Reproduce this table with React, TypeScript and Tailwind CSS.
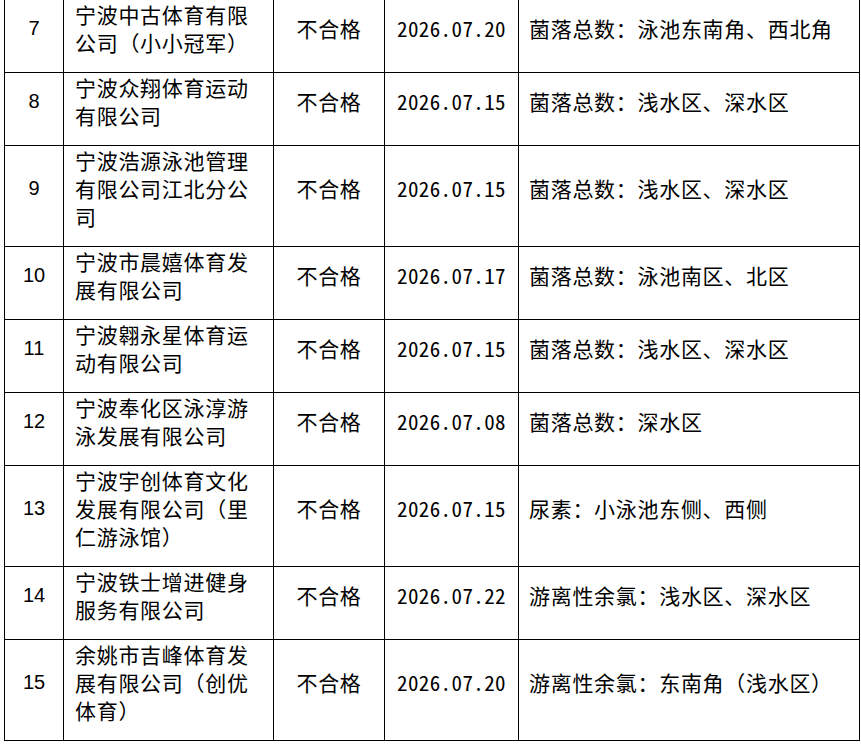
interface Row {
  no: number;
  company: string;
  result: string;
  date: string;
  item: string;
}

const rows: Row[] = [
  { no: 7, company: "宁波中古体育有限公司（小小冠军）", result: "不合格", date: "2026.07.20", item: "菌落总数：泳池东南角、西北角" },
  { no: 8, company: "宁波众翔体育运动有限公司", result: "不合格", date: "2026.07.15", item: "菌落总数：浅水区、深水区" },
  { no: 9, company: "宁波浩源泳池管理有限公司江北分公司", result: "不合格", date: "2026.07.15", item: "菌落总数：浅水区、深水区" },
  { no: 10, company: "宁波市晨嬉体育发展有限公司", result: "不合格", date: "2026.07.17", item: "菌落总数：泳池南区、北区" },
  { no: 11, company: "宁波翱永星体育运动有限公司", result: "不合格", date: "2026.07.15", item: "菌落总数：浅水区、深水区" },
  { no: 12, company: "宁波奉化区泳淳游泳发展有限公司", result: "不合格", date: "2026.07.08", item: "菌落总数：深水区" },
  { no: 13, company: "宁波宇创体育文化发展有限公司（里仁游泳馆）", result: "不合格", date: "2026.07.15", item: "尿素：小泳池东侧、西侧" },
  { no: 14, company: "宁波铁士增进健身服务有限公司", result: "不合格", date: "2026.07.22", item: "游离性余氯：浅水区、深水区" },
  { no: 15, company: "余姚市吉峰体育发展有限公司（创优体育）", result: "不合格", date: "2026.07.20", item: "游离性余氯：东南角（浅水区）" },
];

// Word-style cell: small space above, paragraph spacing below
const cell = "border border-black pt-0 pb-4 align-middle leading-[28px]";

export default function App() {
  return (
    <div className="min-h-screen bg-white text-black font-['Noto_Sans_CJK_SC',sans-serif] text-[21px] tracking-[0.7px]">
      <table className="ml-1 -mt-px w-[855px] table-fixed border-collapse">
        <colgroup>
          <col className="w-[59px]" />
          <col className="w-[210px]" />
          <col className="w-[111px]" />
          <col className="w-[134px]" />
          <col className="w-[341px]" />
        </colgroup>
        <tbody>
          {rows.map((r) => (
            <tr key={r.no}>
              <td className={`${cell} text-center font-['Liberation_Sans',sans-serif] text-[20px] tracking-normal`}>
                {r.no}
              </td>
              <td className={`${cell} pl-[11px] pr-[11px] text-left`}>{r.company}</td>
              <td className={`${cell} text-center`}>{r.result}</td>
              <td className={`${cell} text-center tracking-[0.4px] [font-feature-settings:'hwid']`}>
                {r.date}
              </td>
              <td className={`${cell} pl-[10px] pr-1 text-left`}>{r.item}</td>
            </tr>
          ))}
        </tbody>
      </table>
    </div>
  );
}
